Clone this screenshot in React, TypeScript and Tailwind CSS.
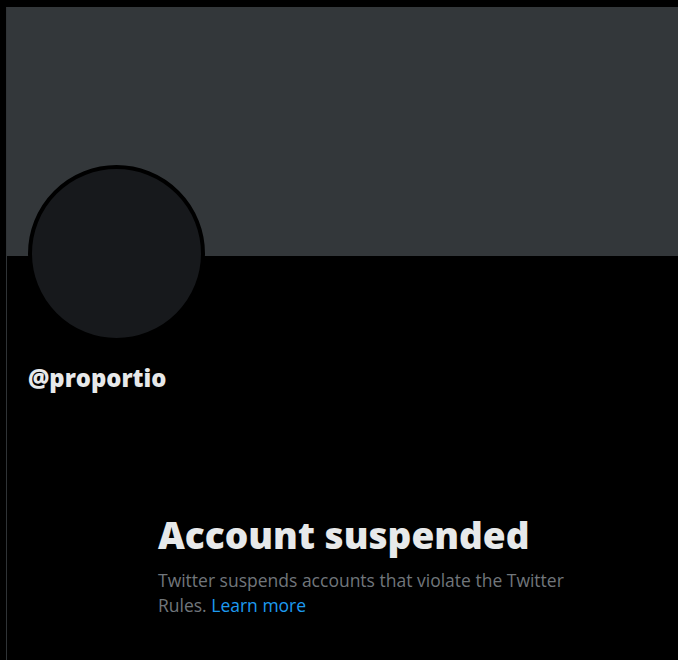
import React from 'react';

const App: React.FC = () => {
  return (
    <div className="h-[660px] w-[678px] overflow-hidden bg-black pl-[6px] pt-[7px] font-['Open_Sans',sans-serif]">
      <div className="h-full border-l border-[#2f3336]">
        {/* Banner */}
        <div className="h-[249px] bg-[#33373a]" />

        {/* Profile head */}
        <div className="px-[21px]">
          <div className="-mt-[91px] h-[177px] w-[177px] rounded-full border-[4px] border-black bg-[#17191c]" />
          <div className="mt-[24px] text-[23.8px] font-extrabold leading-6 text-[#e7e9ea]">@proportio</div>
        </div>

        {/* Empty state */}
        <div className="mt-[123px] pl-[151px]">
          <div className="w-[420px]">
            <h2 className="text-[37px] font-extrabold leading-[44px] text-[#e7e9ea]">Account suspended</h2>
            <p className="mt-[11px] text-[17.5px] leading-[25px] text-[#71767b]">
              Twitter suspends accounts that violate the Twitter Rules.{' '}
              <span className="text-[#1d9bf0]">Learn more</span>
            </p>
          </div>
        </div>
      </div>
    </div>
  );
};

export default App;
